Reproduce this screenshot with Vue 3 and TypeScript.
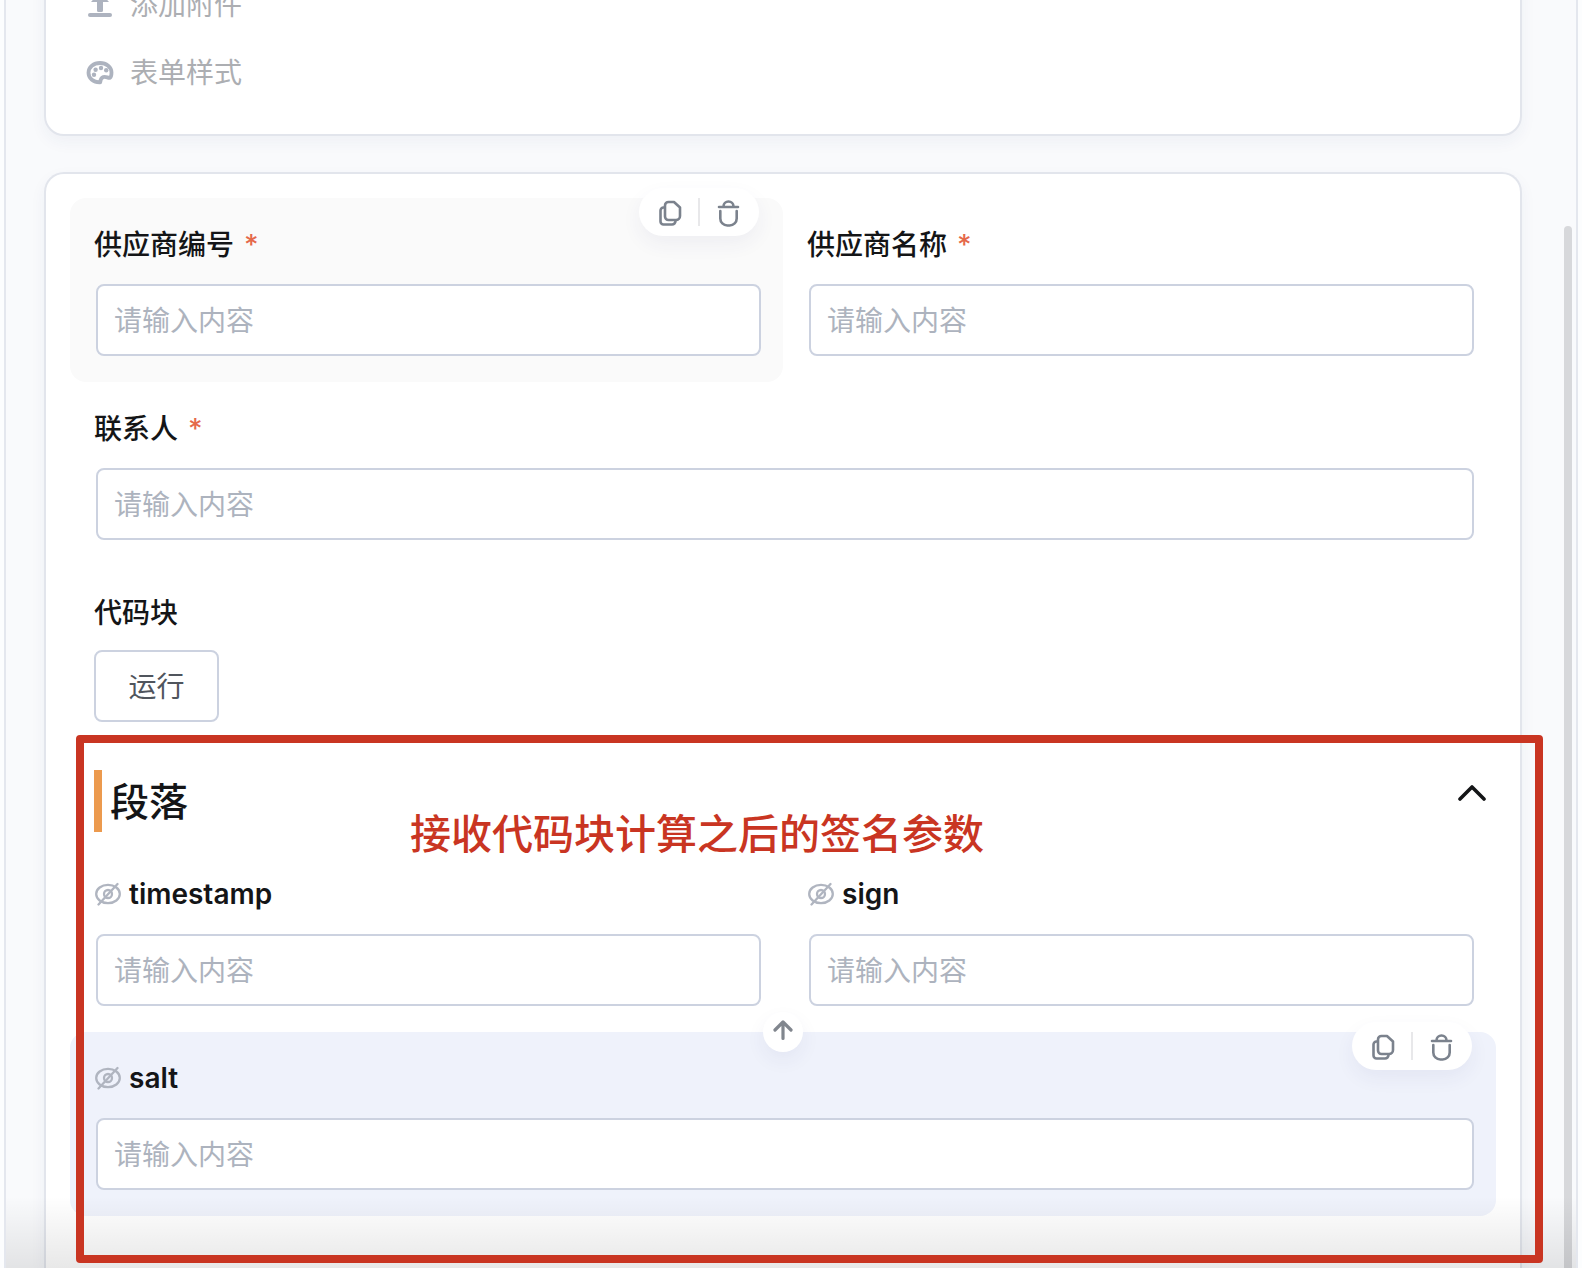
<script setup lang="ts">
import { ref } from 'vue'

interface Field {
  id: string
  label: string
  required?: boolean
  hidden?: boolean
  wide?: boolean
  state?: 'hover' | 'selected'
}

const baseFields: Field[] = [
  { id: 'code', label: '供应商编号', required: true, state: 'hover' },
  { id: 'name', label: '供应商名称', required: true },
  { id: 'contact', label: '联系人', required: true, wide: true },
]

const signFields: Field[] = [
  { id: 'timestamp', label: 'timestamp', hidden: true },
  { id: 'sign', label: 'sign', hidden: true },
  { id: 'salt', label: 'salt', hidden: true, wide: true, state: 'selected' },
]

const groups = [
  { key: 'base', fields: baseFields },
  { key: 'sign', fields: signFields },
]

const values = ref<Record<string, string>>({})
</script>

<template>
  <main class="designer">
    <section class="card settings">
      <button type="button" class="setting">
        <svg class="setting-icon" viewBox="0 0 28 28" aria-hidden="true">
          <path d="M14 1 23 11H17v8.500a1.500 1.500 0 0 1-1.500 1.500h-3a1.500 1.500 0 0 1-1.500-1.500V11H5z" fill="currentColor" />
          <path d="M4 24h20" stroke="currentColor" stroke-width="4" stroke-linecap="round" />
        </svg>
        添加附件
      </button>
      <button type="button" class="setting">
        <svg class="setting-icon" viewBox="0 0 28 28" aria-hidden="true">
          <path d="M14.200 23.300C7.500 23.600 2.500 19.400 2.500 13.700 2.500 8 7.600 4 14 4s11.500 4.200 11.500 9.500c0 2.600-.3 4.300-1.500 5.200-1.700.8-4-1.600-6.700-.6-2.200.9-2.900 2.400-3.100 5.200z" fill="none" stroke="currentColor" stroke-width="3.800" stroke-linejoin="round" />
          <circle cx="8" cy="15.800" r="2.200" fill="currentColor" />
          <circle cx="9.600" cy="10.800" r="2.200" fill="currentColor" />
          <circle cx="15" cy="9" r="2.200" fill="currentColor" />
          <circle cx="20.200" cy="11.200" r="2.200" fill="currentColor" />
        </svg>
        表单样式
      </button>
    </section>

    <section class="card form">
      <div v-for="group in groups" :key="group.key" class="group">
        <header v-if="group.key === 'sign'" class="group-head">
          <h2 class="group-title">段落</h2>
          <button type="button" class="collapse" aria-label="收起">
            <svg viewBox="0 0 28 16" aria-hidden="true">
              <path d="M2 14 14 2l12 12" fill="none" stroke="currentColor" stroke-width="3.600" stroke-linecap="round" stroke-linejoin="round" />
            </svg>
          </button>
        </header>

        <div
          v-for="field in group.fields"
          :key="field.id"
          class="field"
          :class="[field.state, { wide: field.wide }]"
        >
          <label class="label" :class="{ concealed: field.hidden }" :for="field.id">
            <svg v-if="field.hidden" class="eye" viewBox="0 0 28 24" aria-hidden="true">
              <g fill="none" stroke="currentColor" stroke-width="2.300" stroke-linecap="round">
                <ellipse cx="15" cy="12" rx="11.800" ry="9.200" />
                <circle cx="15" cy="12" r="4" />
                <path d="M5.500 22.500 24.500 2" />
              </g>
            </svg>
            {{ field.label }}
            <span v-if="field.required" class="star">*</span>
          </label>
          <input :id="field.id" v-model="values[field.id]" class="input" type="text" placeholder="请输入内容" />

          <div v-if="field.state" class="tools">
            <button type="button" class="tool" aria-label="复制">
              <svg viewBox="0 0 28 30" aria-hidden="true">
                <g fill="none" stroke="currentColor" stroke-width="2.600" stroke-linejoin="round">
                  <path d="M13.500 5h5.500l6 5.500v8.500a4 4 0 0 1-4 4h-7.500a3.500 3.500 0 0 1-3.500-3.500v-11a3.500 3.500 0 0 1 3.500-3.500z" />
                  <path d="M9.500 10.500h-1a3 3 0 0 0-3 3v11a3 3 0 0 0 3 3H17a3.500 3.500 0 0 0 3.500-3.500" />
                </g>
              </svg>
            </button>
            <span class="divider"></span>
            <button type="button" class="tool" aria-label="删除">
              <svg viewBox="0 0 28 30" aria-hidden="true">
                <g fill="none" stroke="currentColor" stroke-width="2.600" stroke-linecap="round">
                  <path d="M3 10h19M7.500 9.500a5 5 0 0 1 10 0" />
                  <path d="M4.300 14v7.500a7 7 0 0 0 7 7h2.400a7 7 0 0 0 7-7V14" />
                </g>
              </svg>
            </button>
          </div>
          <button v-if="field.state === 'selected'" type="button" class="move-up" aria-label="上移">
            <svg viewBox="0 0 20 24" aria-hidden="true">
              <path d="M10 18.500V2M2 10l8-8 8 8" fill="none" stroke="currentColor" stroke-width="3.200" stroke-linecap="round" stroke-linejoin="round" />
            </svg>
          </button>
        </div>

        <div v-if="group.key === 'base'" class="field wide code">
          <span class="label">代码块</span>
          <button type="button" class="run">运行</button>
        </div>

        <div v-if="group.key === 'sign'" class="note">
          <p class="note-text">接收代码块计算之后的签名参数</p>
        </div>
      </div>
    </section>

    <div class="scrollbar"></div>
    <div class="fade"></div>
  </main>
</template>

<style>
body {
  background: #fcfdfe;
}
</style>

<style scoped>
.designer,
.designer * {
  box-sizing: border-box;
}

.designer {
  position: relative;
  display: flex;
  flex-direction: column;
  gap: 36px;
  height: 100vh;
  margin: 0 4px;
  padding: 0 54px 0 38px;
  overflow: hidden;
  border: solid #e4e7ee;
  border-width: 0 2px;
  background: #f9fafc;
  color: #141517;
  font-family: Inter, 'Noto Sans CJK SC', sans-serif;
  font-size: 28px;
  line-height: 40px;
}

button,
input {
  margin: 0;
  padding: 0;
  border: 0;
  background: none;
  color: inherit;
  font: inherit;
}

svg {
  display: block;
  flex: none;
}

.card {
  border: 2px solid #e2e5ec;
  border-radius: 20px;
  background: #fff;
  box-shadow: 0 6px 16px rgba(40, 50, 110, 0.05);
}

.settings {
  flex: none;
  margin-top: -31px;
  padding: 0 40px 27px;
}

.setting {
  display: flex;
  align-items: center;
  gap: 16px;
  height: 68px;
  color: #acaeb2;
}

.setting-icon {
  width: 28px;
  height: 28px;
  color: #adb3bf;
}

.form {
  flex: 1 0 auto;
  padding: 24px 24px 50px;
  border-bottom: 0;
  border-radius: 20px 20px 0 0;
}

.group {
  position: relative;
  display: grid;
  grid-template-columns: 1fr 1fr;
}

.field {
  position: relative;
  display: flex;
  flex-direction: column;
  height: 184px;
  padding: 26px 22px 26px 26px;
  border-radius: 16px;
}

.wide,
.group-head {
  grid-column: 1 / -1;
}

.hover {
  background: #fafafa;
}

.selected {
  background: #eff2fb;
}

.label {
  display: flex;
  align-items: center;
  gap: 10px;
  height: 40px;
  margin-left: -2px;
  padding-top: 2px;
  font-weight: 500;
}

.concealed {
  gap: 8px;
  padding-top: 0;
  font-weight: 600;
}

.eye {
  width: 28px;
  height: 24px;
  margin-left: -1px;
  color: #b0b5c0;
}

.star {
  color: #e5694a;
}

.input {
  width: 100%;
  height: 72px;
  margin-top: 20px;
  padding: 2px 16px 0;
  border: 2px solid #ccd2e0;
  border-radius: 8px;
  background: #fff;
}

.input::placeholder {
  color: #adb3be;
  opacity: 1;
}

.run {
  width: 125px;
  height: 72px;
  margin: 18px 0 0 -2px;
  padding-top: 2px;
  border: 2px solid #ccd2e0;
  border-radius: 8px;
  color: #50555d;
}

.tools {
  position: absolute;
  top: -10px;
  right: 24px;
  display: flex;
  align-items: center;
  width: 120px;
  height: 48px;
  border-radius: 24px;
  background: #fff;
  box-shadow: 0 8px 20px rgba(50, 50, 120, 0.06);
  color: #7b828d;
}

.tool {
  display: flex;
  flex: 1;
  justify-content: center;
}

.tool svg {
  width: 28px;
  height: 30px;
}

.divider {
  width: 2px;
  height: 28px;
  background: #e8e8ea;
}

.move-up {
  position: absolute;
  top: -20px;
  left: calc(50% - 20px);
  display: flex;
  align-items: center;
  justify-content: center;
  width: 40px;
  height: 40px;
  border-radius: 50%;
  background: #fff;
  box-shadow: 0 8px 20px rgba(50, 50, 120, 0.06);
  color: #81868e;
}

.move-up svg {
  width: 20px;
  height: 24px;
}

.group-head {
  display: flex;
  align-items: flex-start;
  justify-content: space-between;
  padding: 20px 10px 16px 24px;
}

.group-title {
  margin: 0;
  padding: 1px 0 0 8px;
  border-left: 8px solid #ec9a4e;
  font-size: 39px;
  font-weight: 500;
  line-height: 61px;
}

.collapse {
  padding: 15px 0;
}

.collapse svg {
  width: 28px;
  height: 16px;
}

.note {
  position: absolute;
  inset: -15px -47px -47px 6px;
  z-index: 2;
  border: 8px solid #c93522;
  border-radius: 4px;
  pointer-events: none;
}

.note-text {
  position: absolute;
  top: 61px;
  left: 326px;
  margin: 0;
  color: #c93522;
  font-size: 41px;
  font-weight: 500;
  line-height: 60px;
  white-space: nowrap;
}

.scrollbar {
  position: absolute;
  top: 226px;
  right: 4px;
  bottom: 0;
  width: 8px;
  border-radius: 4px 4px 0 0;
  background: #d7d8db;
}

.fade {
  position: absolute;
  inset: auto 0 0;
  z-index: 1;
  height: 72px;
  background: linear-gradient(rgba(0, 0, 0, 0), rgba(0, 0, 0, 0.09));
  pointer-events: none;
}
</style>
